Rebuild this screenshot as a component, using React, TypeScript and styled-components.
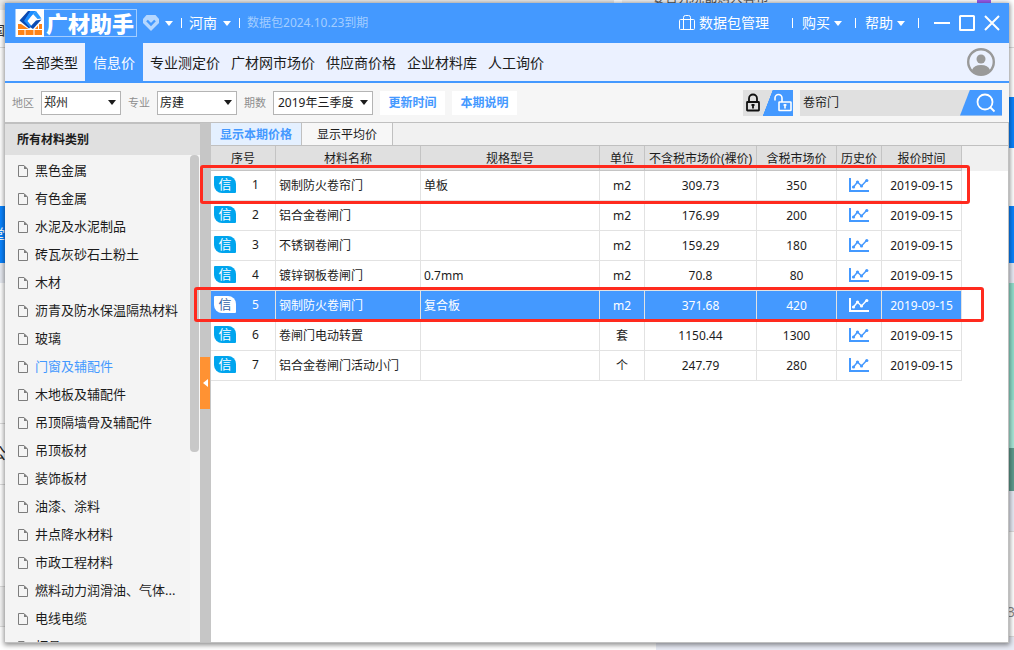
import React from "react";
import styled, { createGlobalStyle, css } from "styled-components";

const blue = "#4499ff";
const sans = `"Noto Sans", "Noto Sans CJK SC", sans-serif`;

const GlobalStyle = createGlobalStyle`
  *, *::before, *::after { box-sizing: border-box; }
  body { margin: 0; background: #fff; font-family: ${sans}; font-size: 12px; line-height: 16px; color: #1c1c1c; overflow: hidden; }
  button, input, select { font: inherit; color: inherit; margin: 0; padding: 0; border: 0; background: none; border-radius: 0; }
  button { cursor: pointer; }
  a { color: inherit; text-decoration: none; }
  svg { display: block; flex: none; }
`;

/* ---------- desktop behind the window ---------- */

const Desktop = styled.div`
  position: relative;
  height: 100vh;
  padding: 3px 5px 7px;
  overflow: hidden;
`;

const Strip = styled.div<{ $side: "left" | "right" }>`
  position: absolute;
  top: 0;
  bottom: 0;
  width: 8px;
  ${(p) => p.$side}: 0;
  display: flex;
  flex-direction: column;
`;

const Patch = styled.div<{ $h: number; $bg: string; $line?: boolean }>`
  height: ${(p) => p.$h}px;
  flex: none;
  background: ${(p) => p.$bg};
  border-bottom: ${(p) => (p.$line ? "1px solid #dcdcdc" : "0")};
`;

const TopStrip = styled.div`
  position: absolute;
  top: 0;
  left: 0;
  right: 0;
  height: 6px;
  display: flex;
  overflow: hidden;
`;

const TopPatch = styled.div<{ $w?: number; $bg: string }>`
  ${(p) => (p.$w ? `width: ${p.$w}px; flex: none;` : "flex: 1;")}
  background: ${(p) => p.$bg};
`;

const BottomPatch = styled.div`
  position: absolute;
  right: 0;
  bottom: 0;
  width: 358px;
  height: 10px;
  background: #e8ebf5;
`;

const Fragment = styled.span<{ $top: number; $left?: number; $right?: number; $color: string; $size: number }>`
  position: absolute;
  top: ${(p) => p.$top}px;
  ${(p) => (p.$left !== undefined ? `left: ${p.$left}px;` : `right: ${p.$right}px;`)}
  color: ${(p) => p.$color};
  font-size: ${(p) => p.$size}px;
  line-height: 20px;
  white-space: nowrap;
`;

/* ---------- window frame ---------- */

const AppWindow = styled.main`
  position: relative;
  height: 100%;
  display: flex;
  flex-direction: column;
  background: #fff;
  box-shadow: 0 1px 5px 1px rgba(0, 0, 0, 0.45);
`;

const TitleBar = styled.header`
  flex: none;
  height: 40px;
  padding: 0 9px 0 10px;
  display: flex;
  align-items: center;
  background: ${blue};
  color: #fff;
  font-size: 14px;
  line-height: 20px;
  white-space: nowrap;
`;

const Brand = styled.div`
  display: flex;
  height: 28px;
  margin-right: 6px;
  border: 1px solid #a3cdff;
  align-items: center;
`;

const BrandName = styled.h1`
  margin: 0;
  padding: 0 2px;
  font-family: "Noto Sans CJK SC", sans-serif;
  font-size: 22px;
  line-height: 24px;
  height: 26px;
  font-weight: 900;
`;

const MenuButton = styled.button`
  display: flex;
  align-items: center;
  gap: 4px;
`;

const PlaceButton = styled(MenuButton)`
  gap: 6px;
`;

const Divider = styled.span`
  width: 1px;
  height: 10px;
  margin: 0 9px 0 13px;
  background: #fff;
`;

const PlaceDivider = styled(Divider)`
  margin: 0 7px 0 8px;
`;

const Expiry = styled.span`
  font-size: 12px;
  color: #a3cdff;
`;

const TitleActions = styled.div`
  margin-left: auto;
  display: flex;
  align-items: center;
`;

const PackageButton = styled(MenuButton)`
  margin-right: 10px;
`;

const WindowButtons = styled.div`
  display: flex;
  gap: 9px;
  margin-left: 6px;
`;

/* ---------- navigation ---------- */

const Nav = styled.nav`
  flex: none;
  height: 40px;
  padding: 0 14px 0 17px;
  display: flex;
  align-items: center;
  gap: 11px;
  background: #ebf1ff;
  border-bottom: 2px solid ${blue};
`;

const NavTab = styled.a<{ $active?: boolean }>`
  height: 38px;
  font-size: 14px;
  line-height: 40px;
  white-space: nowrap;
  ${(p) =>
    p.$active &&
    css`
      padding: 0 8px;
      margin: 0 -4px;
      background: ${blue};
      color: #fff;
    `}
`;

const AvatarButton = styled.button`
  margin-left: auto;
`;

/* ---------- filter bar ---------- */

const FilterBar = styled.div`
  flex: none;
  height: 40px;
  padding: 0 7px;
  display: flex;
  align-items: center;
  gap: 7px;
  background: #f6f6f6;
  border-bottom: 1px solid #c0c0c0;
  white-space: nowrap;
`;

const FilterLabel = styled.label`
  font-size: 11px;
  color: #8e8e8e;
`;

const SelectBox = styled.span<{ $w: number }>`
  width: ${(p) => p.$w}px;
  height: 24px;
  display: grid;
  align-items: center;
  background: #fff;
  border: 1px solid #b4b4b4;
  & > * {
    grid-area: 1 / 1;
  }
  & > svg {
    justify-self: end;
    margin-right: 4px;
    pointer-events: none;
  }
`;

const Select = styled.select<{ $wide?: boolean }>`
  appearance: none;
  width: 100%;
  height: 22px;
  padding-left: ${(p) => (p.$wide ? 4 : 2)}px;
  outline: none;
`;

const FilterButton = styled.button`
  width: 65px;
  height: 24px;
  background: #fff;
  color: ${blue};
  font-weight: 700;
`;

const LockSwitch = styled.div`
  margin-left: auto;
  width: 50px;
  height: 26px;
  display: flex;
  justify-content: space-between;
  align-items: center;
  background: linear-gradient(111deg, #e0e0e0 49%, ${blue} 50%);
`;

const LockButton = styled.button`
  width: 20px;
  height: 26px;
  display: grid;
  place-items: center;
`;

const SearchForm = styled.form`
  width: 202px;
  height: 26px;
  display: flex;
  background: #e0e0e0;
`;

const SearchInput = styled.input`
  flex: 1;
  min-width: 0;
  padding-left: 3px;
  outline: none;
`;

const SearchButton = styled.button`
  width: 42px;
  padding-left: 10px;
  display: grid;
  place-items: center;
  background: ${blue};
  clip-path: polygon(10px 0, 100% 0, 100% 100%, 0 100%);
`;

/* ---------- body ---------- */

const Body = styled.div`
  flex: 1;
  min-height: 0;
  display: flex;
  border: solid #c0c0c0;
  border-width: 0 1px 1px 0;
`;

const Sidebar = styled.aside`
  flex: none;
  width: 195px;
  display: flex;
  flex-direction: column;
  background: #f4f4f4;
  border-top: 1px solid #c0c0c0;
`;

const SidebarTitle = styled.h2`
  flex: none;
  margin: 0;
  height: 31px;
  padding-left: 12px;
  background: #e0e0e0;
  font-size: 12px;
  line-height: 31px;
  font-weight: 700;
`;

const SidebarBody = styled.div`
  flex: 1;
  min-height: 0;
  display: flex;
`;

const CategoryList = styled.ul`
  flex: 1;
  min-width: 0;
  margin: 0;
  padding: 1px 0 0 13px;
  list-style: none;
  overflow: hidden;
`;

const Category = styled.a<{ $active?: boolean }>`
  height: 28px;
  display: flex;
  align-items: center;
  gap: 7px;
  font-size: 13px;
  line-height: 28px;
  white-space: nowrap;
  color: ${(p) => (p.$active ? blue : "#1c1c1c")};
`;

const ScrollTrack = styled.div`
  flex: none;
  width: 10px;
  padding-right: 1px;
  background: #f7f7f7;
`;

const ScrollThumb = styled.div`
  height: 61%;
  border-radius: 4px;
  background: #c8c8c8;
`;

const Splitter = styled.div`
  flex: none;
  width: 11px;
  display: flex;
  align-items: center;
  background: #c6c6c6;
`;

const CollapseButton = styled.button`
  width: 10px;
  height: 52px;
  display: grid;
  place-items: center;
  background: #ff9233;
`;

const Content = styled.section`
  flex: 1;
  min-width: 0;
  background: #fff;
`;

const ViewTabs = styled.div`
  height: 23px;
  display: flex;
  background: #f1f1f1;
  border-bottom: 1px solid #c0c0c0;
`;

const ViewTab = styled.button<{ $active?: boolean }>`
  width: 91px;
  padding-top: 2px;
  border-right: 1px solid #c0c0c0;
  background: ${(p) => (p.$active ? "#e4f0ff" : "#f7f7f7")};
  color: ${(p) => (p.$active ? blue : "#1c1c1c")};
  font-weight: ${(p) => (p.$active ? 700 : 400)};
`;

const TableArea = styled.div`
  background: linear-gradient(#f0f0f0 25px, transparent 25px);
`;

const Table = styled.table`
  table-layout: fixed;
  width: 751px;
  border-collapse: separate;
  border-spacing: 0;
  font-size: 12px;
  line-height: 16px;
`;

const Th = styled.th<{ $w: number }>`
  width: ${(p) => p.$w}px;
  height: 25px;
  padding: 2px 0 0;
  background: #e0e0e0;
  border: solid #c4c4c4;
  border-width: 0 1px 1px 0;
  font-weight: 400;
  white-space: nowrap;
`;

const Td = styled.td<{ $left?: boolean }>`
  height: 30px;
  padding: ${(p) => (p.$left ? "0 3px" : "0")};
  border: solid #e2e2e2;
  border-width: 0 1px 1px 0;
  text-align: ${(p) => (p.$left ? "left" : "center")};
  white-space: nowrap;
`;

const Row = styled.tr<{ $selected: boolean }>`
  color: ${(p) => (p.$selected ? "#fff" : "#1c1c1c")};
  background: ${(p) => (p.$selected ? blue : "#fff")};
`;

const IndexCell = styled.div`
  display: flex;
  align-items: center;
  padding: 0 0 2px 3px;
`;

const IndexNumber = styled.span`
  flex: 1;
`;

const InfoBadge = styled.span<{ $selected: boolean }>`
  width: 22px;
  height: 17px;
  border-radius: 1px 8px 1px 8px;
  background: ${(p) => (p.$selected ? "#fff" : "#00a5ee")};
  color: ${(p) => (p.$selected ? "#2d62a8" : "#fff")};
  font-size: 13px;
  line-height: 17px;
  text-align: center;
`;

const TrendButton = styled.button`
  display: block;
  margin: 0 auto;
  padding-bottom: 2px;
  color: inherit;
`;

const Highlight = styled.div<{ $top: number; $left: number; $right: number; $height: number }>`
  position: absolute;
  top: ${(p) => p.$top}px;
  left: ${(p) => p.$left}px;
  right: ${(p) => p.$right}px;
  height: ${(p) => p.$height}px;
  border: 3px solid #ff2a1e;
  border-radius: 3px;
  pointer-events: none;
`;

/* ---------- drawings ---------- */

const Caret = ({ color = "#fff" }: { color?: string }) => (
  <svg width="8" height="5" viewBox="0 0 8 5" aria-hidden="true">
    <path d="M0 0h8L4 5z" fill={color} />
  </svg>
);

const LogoMark = () => (
  <svg width="28" height="28" viewBox="0 0 28 28" aria-hidden="true">
    <rect width="28" height="28" fill="#fff" />
    <path d="M2 15h24v11H2z" fill="#ff8316" />
    <path d="M2 20.500h24M9 21v5M18 21v5M22.500 15v5" stroke="#fff" strokeWidth="1" />
    <path d="M2 13L11 1h10l6 10-9 10h-4z" fill="#fff" />
    <path d="M3.500 11.500L12 2h3l-6 9.500 6.500 5.500-2.500 2.500z" fill="#0b4bb3" />
    <path d="M14.500 2H20l-5 5.500-3.500 4.500 4 5-1.500 1.500L8 12z" fill="#1a8cff" />
    <path d="M20 2l5.500 7.500-4 .5L17 5z" fill="#2a9bff" />
    <path d="M25.500 10.500L17 20l-3-2 6-6.500z" fill="#0b4bb3" />
  </svg>
);

const Gem = () => (
  <svg width="16" height="16" viewBox="0 0 16 16" aria-hidden="true">
    <path d="M3.500 0h9L16 4v4l-8 8-8-8V4z" fill="#b5d7ff" />
    <path d="M4 5.500l4 4 4-4" fill="none" stroke={blue} strokeWidth="2.400" />
  </svg>
);

const Briefcase = () => (
  <svg width="16" height="16" viewBox="0 0 16 16" fill="none" stroke="#fff" aria-hidden="true">
    <rect x="0.500" y="4.500" width="15" height="10" rx="1" />
    <path d="M4.500 14.500V2.500q0-2 2-2h3q2 0 2 2v12" />
  </svg>
);

const Minimise = () => (
  <svg width="16" height="16" viewBox="0 0 16 16" aria-hidden="true">
    <path d="M0 8h16" stroke="#fff" strokeWidth="2" />
  </svg>
);

const Maximise = () => (
  <svg width="16" height="16" viewBox="0 0 16 16" aria-hidden="true">
    <rect x="1" y="1" width="14" height="14" fill="none" stroke="#fff" strokeWidth="2" rx="0.500" />
  </svg>
);

const Close = () => (
  <svg width="16" height="16" viewBox="0 0 16 16" aria-hidden="true">
    <path d="M1 1l14 14M15 1L1 15" stroke="#fff" strokeWidth="2" />
  </svg>
);

const Avatar = () => (
  <svg width="28" height="28" viewBox="0 0 28 28" aria-hidden="true">
    <circle cx="14" cy="14" r="12.800" fill="#ebf1ff" stroke="#999" strokeWidth="2.400" />
    <circle cx="14" cy="11" r="4.500" fill="#999" />
    <path d="M5 22q2-5 9-5t9 5q-4 5-9 5t-9-5z" fill="#999" />
  </svg>
);

const Lock = () => (
  <svg width="16" height="20" viewBox="0 0 16 20" fill="none" stroke="#111" strokeWidth="1.800" aria-hidden="true">
    <rect x="2" y="9" width="12" height="8.500" rx="0.500" />
    <path d="M4 9V5.500a4 4 0 0 1 8 0V9" />
    <path d="M6.500 12h3M8 11v4.500" />
  </svg>
);

const Unlock = () => (
  <svg width="20" height="20" viewBox="0 0 20 20" fill="none" stroke="#fff" strokeWidth="1.600" aria-hidden="true">
    <rect x="6" y="9" width="12" height="8.500" rx="0.500" />
    <path d="M2 7.500V5a3.500 3.500 0 0 1 7 0v4" />
    <path d="M10.500 12h3M12 11v4.500" />
  </svg>
);

const Magnifier = () => (
  <svg width="20" height="20" viewBox="0 0 20 20" fill="none" stroke="#fff" strokeWidth="1.800" aria-hidden="true">
    <circle cx="9" cy="9" r="7.500" />
    <path d="M14.500 14.500l4 4" />
  </svg>
);

const Page = () => (
  <svg width="10" height="14" viewBox="0 -2 10 14" fill="none" stroke="#7d7d7d" aria-hidden="true">
    <path d="M0.500 0.500h5.500l3.500 3.500v7.500h-9z" />
    <path d="M6 0.500v3.500h3.500z" fill="#7d7d7d" stroke="none" />
  </svg>
);

const Trend = ({ selected }: { selected: boolean }) => {
  const ink = selected ? "#fff" : blue;
  return (
    <svg width="20" height="14" viewBox="0 0 20 14" fill="none" stroke={ink} aria-hidden="true">
      <path d="M1 0v13h19" strokeWidth="2" />
      <path d="M4.500 9l4-5 4 4 5.500-6" strokeWidth="1.500" />
      <g fill={ink} stroke="none">
        <circle cx="4.500" cy="9" r="1.600" />
        <circle cx="8.500" cy="4" r="1.600" />
        <circle cx="12.500" cy="8" r="1.600" />
        <circle cx="17.800" cy="2.500" r="1.600" />
      </g>
    </svg>
  );
};

/* ---------- data ---------- */

const navItems = ["全部类型", "信息价", "专业测定价", "广材网市场价", "供应商价格", "企业材料库", "人工询价"];

const filters = [
  { id: "region", label: "地区", value: "郑州", width: 80 },
  { id: "major", label: "专业", value: "房建", width: 80 },
  { id: "period", label: "期数", value: "2019年三季度", width: 100 },
];

const categories = [
  "黑色金属", "有色金属", "水泥及水泥制品", "砖瓦灰砂石土粉土", "木材", "沥青及防水保温隔热材料",
  "玻璃", "门窗及辅配件", "木地板及辅配件", "吊顶隔墙骨及辅配件", "吊顶板材", "装饰板材", "油漆、涂料",
  "井点降水材料", "市政工程材料", "燃料动力润滑油、气体...", "电线电缆", "灯具",
];

const columns: [string, number][] = [
  ["序号", 65], ["材料名称", 145], ["规格型号", 179], ["单位", 45],
  ["不含税市场价(裸价)", 112], ["含税市场价", 80], ["历史价", 45], ["报价时间", 80],
];

const rows = [
  ["钢制防火卷帘门", "单板", "m2", "309.73", "350"],
  ["铝合金卷闸门", "", "m2", "176.99", "200"],
  ["不锈钢卷闸门", "", "m2", "159.29", "180"],
  ["镀锌钢板卷闸门", "0.7mm", "m2", "70.8", "80"],
  ["钢制防火卷闸门", "复合板", "m2", "371.68", "420"],
  ["卷闸门电动转置", "", "套", "1150.44", "1300"],
  ["铝合金卷闸门活动小门", "", "个", "247.79", "280"],
];

const selectedRow = 4;

export default function App() {
  return (
    <>
      <GlobalStyle />
      <Desktop>
        <BottomPatch aria-hidden="true" />
        <Strip $side="left" aria-hidden="true">
          <Patch $h={10} $bg="#ececec" />
          <Patch $h={38} $bg="#fff" $line />
          <Patch $h={158} $bg="#fff" />
          <Patch $h={57} $bg="#0a84ff" />
          <Patch $h={20} $bg="#e8ebf2" />
          <Patch $h={141} $bg="#fff" $line />
          <Patch $h={61} $bg="#fff" $line />
          <Patch $h={102} $bg="#fff" $line />
          <Patch $h={40} $bg="#f4f4f4" $line />
        </Strip>
        <Strip $side="right" aria-hidden="true">
          <Patch $h={48} $bg="#fff" $line />
          <Patch $h={49} $bg="#fff" />
          <Patch $h={51} $bg="#0a84ff" />
          <Patch $h={58} $bg="#fff" />
          <Patch $h={57} $bg="#0a84ff" />
          <Patch $h={20} $bg="#e8ebf5" />
          <Patch $h={117} $bg="#92dfcd" />
          <Patch $h={48} $bg="#a8e8d8" />
          <Patch $h={43} $bg="#5f9c8e" />
          <Patch $h={41} $bg="#e8ebf5" $line />
          <Patch $h={105} $bg="#fff" $line />
          <Patch $h={20} $bg="#e8ebf5" />
        </Strip>
        <TopStrip aria-hidden="true">
          <TopPatch $w={614} $bg="#e9e9e9" />
          <TopPatch $w={8} $bg="#fff" />
          <TopPatch $w={308} $bg="#f0f0f0" />
          <TopPatch $w={47} $bg="#fff" />
          <TopPatch $w={14} $bg="#9a5cf0" />
          <TopPatch $bg="#fff" />
        </TopStrip>
        <Fragment $top={-13} $left={652} $color="#555" $size={13} aria-hidden="true">要言九况都购兴客币</Fragment>
        <Fragment $top={20} $left={-8} $color="#333" $size={13} aria-hidden="true">国</Fragment>
        <Fragment $top={224} $left={-9} $color="#fff" $size={14} aria-hidden="true">堂</Fragment>
        <Fragment $top={443} $left={-10} $color="#222" $size={16} aria-hidden="true">公</Fragment>
        <Fragment $top={602} $right={-1} $color="#888" $size={14} aria-hidden="true">3</Fragment>

        <AppWindow>
          <TitleBar>
            <Brand>
              <LogoMark />
              <BrandName>广材助手</BrandName>
            </Brand>
            <PlaceButton aria-label="会员">
              <Gem />
              <Caret />
            </PlaceButton>
            <PlaceDivider />
            <PlaceButton>
              河南
              <Caret />
            </PlaceButton>
            <PlaceDivider />
            <Expiry>数据包2024.10.23到期</Expiry>
            <TitleActions>
              <PackageButton>
                <Briefcase />
                数据包管理
              </PackageButton>
              <Divider />
              <MenuButton>
                购买
                <Caret />
              </MenuButton>
              <Divider />
              <MenuButton>
                帮助
                <Caret />
              </MenuButton>
              <Divider />
              <WindowButtons>
                <button aria-label="最小化"><Minimise /></button>
                <button aria-label="最大化"><Maximise /></button>
                <button aria-label="关闭"><Close /></button>
              </WindowButtons>
            </TitleActions>
          </TitleBar>

          <Nav>
            {navItems.map((item, i) => (
              <NavTab key={item} href="#" $active={i === 1}>{item}</NavTab>
            ))}
            <AvatarButton aria-label="用户"><Avatar /></AvatarButton>
          </Nav>

          <FilterBar>
            {filters.map((f) => (
              <React.Fragment key={f.id}>
                <FilterLabel htmlFor={f.id}>{f.label}</FilterLabel>
                <SelectBox $w={f.width}>
                  <Select id={f.id} $wide={f.width > 80}>
                    <option>{f.value}</option>
                  </Select>
                  <Caret color="#1c1c1c" />
                </SelectBox>
              </React.Fragment>
            ))}
            <FilterButton>更新时间</FilterButton>
            <FilterButton>本期说明</FilterButton>
            <LockSwitch>
              <LockButton aria-label="锁定"><Lock /></LockButton>
              <LockButton aria-label="解锁"><Unlock /></LockButton>
            </LockSwitch>
            <SearchForm onSubmit={(e) => e.preventDefault()}>
              <SearchInput aria-label="搜索材料" defaultValue="卷帘门" />
              <SearchButton aria-label="搜索"><Magnifier /></SearchButton>
            </SearchForm>
          </FilterBar>

          <Body>
            <Sidebar>
              <SidebarTitle>所有材料类别</SidebarTitle>
              <SidebarBody>
                <CategoryList>
                  {categories.map((name, i) => (
                    <li key={name}>
                      <Category href="#" $active={i === 7}>
                        <Page />
                        {name}
                      </Category>
                    </li>
                  ))}
                </CategoryList>
                <ScrollTrack><ScrollThumb /></ScrollTrack>
              </SidebarBody>
            </Sidebar>
            <Splitter>
              <CollapseButton aria-label="收起">
                <svg width="5" height="8" viewBox="0 0 5 8" aria-hidden="true">
                  <path d="M5 0v8L0 4z" fill="#fff" />
                </svg>
              </CollapseButton>
            </Splitter>
            <Content>
              <ViewTabs>
                <ViewTab $active>显示本期价格</ViewTab>
                <ViewTab>显示平均价</ViewTab>
              </ViewTabs>
              <TableArea>
                <Table>
                  <thead>
                    <tr>
                      {columns.map(([name, width]) => (
                        <Th key={name} $w={width}>{name}</Th>
                      ))}
                    </tr>
                  </thead>
                  <tbody>
                    {rows.map(([name, spec, unit, net, gross], i) => {
                      const selected = i === selectedRow;
                      return (
                        <Row key={name + spec} $selected={selected}>
                          <Td>
                            <IndexCell>
                              <InfoBadge $selected={selected}>信</InfoBadge>
                              <IndexNumber>{i + 1}</IndexNumber>
                            </IndexCell>
                          </Td>
                          <Td $left>{name}</Td>
                          <Td $left>{spec}</Td>
                          <Td>{unit}</Td>
                          <Td>{net}</Td>
                          <Td>{gross}</Td>
                          <Td>
                            <TrendButton aria-label="历史价"><Trend selected={selected} /></TrendButton>
                          </Td>
                          <Td>2019-09-15</Td>
                        </Row>
                      );
                    })}
                  </tbody>
                </Table>
              </TableArea>
            </Content>
          </Body>

          <Highlight $top={162} $left={195} $right={39} $height={39} />
          <Highlight $top={284} $left={189} $right={25} $height={35} />
        </AppWindow>
      </Desktop>
    </>
  );
}
